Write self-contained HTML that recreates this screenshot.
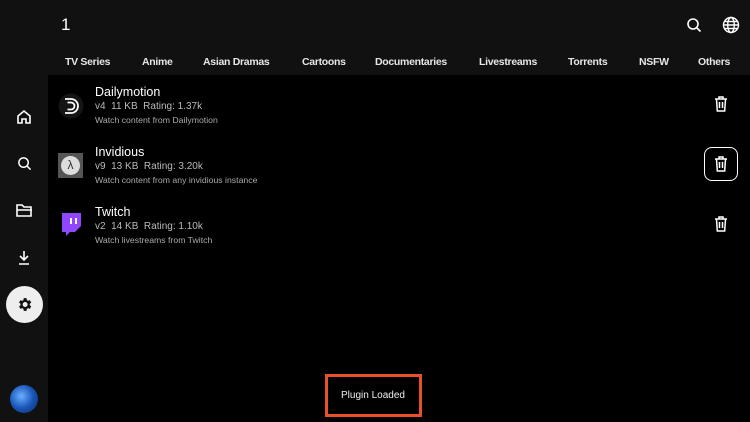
<!DOCTYPE html><html><head><style>
body{margin:0;width:750px;height:422px;background:#000;font-family:"Liberation Sans",sans-serif;color:#fff;position:relative;overflow:hidden}
.a{position:absolute}
.side{left:0;top:0;width:48px;height:422px;background:#111}
.top{left:0;top:0;width:750px;height:75px;background:#111}
.tab{top:56px;font-size:10.5px;font-weight:bold;color:#e6e6e6;white-space:nowrap;letter-spacing:-0.3px}
.t{font-size:12.5px;color:#fff}
.m{font-size:10px;color:#bbb}
.d{font-size:8.7px;color:#aaa}
</style></head><body>
<div class="a top"></div><div class="a side"></div>
<div class="a" style="left:61px;top:15px;font-size:17px">1</div>
<svg class="a" style="left:686px;top:17px" width="16" height="16" viewBox="0 0 16 16"><circle cx="7" cy="7" r="5" fill="none" stroke="#fff" stroke-width="1.6"/><path d="M11 11l3.5 3.5" stroke="#fff" stroke-width="1.6"/></svg>
<svg class="a" style="left:722px;top:16px" width="18" height="18" viewBox="0 0 18 18" fill="none" stroke="#fff" stroke-width="1.4"><circle cx="9" cy="9" r="7.5"/><ellipse cx="9" cy="9" rx="3.3" ry="7.5"/><path d="M1.5 9h15M2.5 5.5h13M2.5 12.5h13"/></svg>
<div class="a tab" style="left:65px">TV Series</div>
<div class="a tab" style="left:142px">Anime</div>
<div class="a tab" style="left:203px">Asian Dramas</div>
<div class="a tab" style="left:302px">Cartoons</div>
<div class="a tab" style="left:375px">Documentaries</div>
<div class="a tab" style="left:479px">Livestreams</div>
<div class="a tab" style="left:568px">Torrents</div>
<div class="a tab" style="left:639px">NSFW</div>
<div class="a tab" style="left:698px">Others</div>
<svg class="a" style="left:16px;top:109px" width="16" height="16" viewBox="0 0 16 16" fill="none" stroke="#fff" stroke-width="1.6"><path d="M2 7l6-5 6 5v7H10v-4H6v4H2z"/></svg>
<svg class="a" style="left:17px;top:156px" width="15" height="15" viewBox="0 0 16 16" fill="none" stroke="#fff" stroke-width="1.6"><circle cx="7" cy="7" r="5"/><path d="M11 11l3.5 3.5"/></svg>
<svg class="a" style="left:16px;top:203px" width="17" height="15" viewBox="0 0 17 15" fill="none" stroke="#fff" stroke-width="1.6"><path d="M1 2h5l2 2h7v9H1z M1 7h15"/></svg>
<svg class="a" style="left:18px;top:250px" width="12" height="15" viewBox="0 0 12 15" fill="none" stroke="#fff" stroke-width="1.6"><path d="M6 1v9M2 6l4 4 4-4M1 14h10"/></svg>
<div class="a" style="left:6px;top:286px;width:37px;height:37px;border-radius:50%;background:#eee"></div>
<svg class="a" style="left:16px;top:296px" width="17" height="17" viewBox="0 0 24 24"><path fill="#111" d="M19.4 13a7.5 7.5 0 000-2l2.1-1.6-2-3.5-2.5 1a7 7 0 00-1.700-1L14.9 3h-4l-.4 2.9a7 7 0 00-1.7 1l-2.5-1-2 3.5L6.4 11a7.5 7.5 0 000 2l-2.1 1.6 2 3.5 2.5-1a7 7 0 001.7 1l.4 2.9h4l.4-2.9a7 7 0 001.7-1l2.5 1 2-3.5zM12.9 15.5a3.5 3.5 0 110-7 3.5 3.5 0 010 7z"/></svg>
<div class="a" style="left:10px;top:385px;width:28px;height:28px;border-radius:50%;background:radial-gradient(circle at 40% 40%,#6ab0ff,#1a56b8 50%,#0a2a66)"></div>
<svg class="a" style="left:58px;top:93px" width="26" height="26" viewBox="0 0 26 26" fill="none" stroke="#fff" stroke-width="1.8"><circle cx="13" cy="13" r="12.5" fill="#151515" stroke="none"/><path d="M7 6h6a7 7 0 010 14H7M9.5 9.5h3.5a3.5 3.5 0 010 7H9.5"/></svg>
<div class="a t" style="left:95px;top:85px">Dailymotion</div>
<div class="a m" style="left:95px;top:101px">v4 &nbsp;11 KB &nbsp;Rating: 1.37k</div>
<div class="a d" style="left:95px;top:115px">Watch content from Dailymotion</div>
<div class="a" style="left:58px;top:153px;width:25px;height:25px;background:#555"></div>
<div class="a" style="left:61px;top:156px;width:19px;height:19px;border-radius:50%;background:#ddd;color:#333;font-size:12px;text-align:center;line-height:19px">λ</div>
<div class="a t" style="left:95px;top:145px">Invidious</div>
<div class="a m" style="left:95px;top:161px">v9 &nbsp;13 KB &nbsp;Rating: 3.20k</div>
<div class="a d" style="left:95px;top:175px">Watch content from any invidious instance</div>
<svg class="a" style="left:59px;top:212px" width="23" height="25" viewBox="0 0 23 25"><path fill="#9146ff" d="M3 1h19v13l-6 6h-5l-4 4v-4H3z"/><path fill="#fff" d="M11 6h2v6h-2zM16 6h2v6h-2z"/></svg>
<div class="a t" style="left:95px;top:205px">Twitch</div>
<div class="a m" style="left:95px;top:221px">v2 &nbsp;14 KB &nbsp;Rating: 1.10k</div>
<div class="a d" style="left:95px;top:235px">Watch livestreams from Twitch</div>
<svg class="a" style="left:714px;top:96px" width="14" height="16" viewBox="0 0 14 16" fill="none" stroke="#fff" stroke-width="1.5"><path d="M1 3h12M5 3V1h4v2M2.5 3l.8 12h7.4l.8-12M5.5 6v6M8.5 6v6"/></svg>
<div class="a" style="left:704px;top:147px;width:34px;height:34px;border:1.5px solid #fff;border-radius:8px;box-sizing:border-box"></div>
<svg class="a" style="left:714px;top:156px" width="14" height="16" viewBox="0 0 14 16" fill="none" stroke="#fff" stroke-width="1.5"><path d="M1 3h12M5 3V1h4v2M2.5 3l.8 12h7.4l.8-12M5.5 6v6M8.5 6v6"/></svg>
<svg class="a" style="left:714px;top:216px" width="14" height="16" viewBox="0 0 14 16" fill="none" stroke="#fff" stroke-width="1.5"><path d="M1 3h12M5 3V1h4v2M2.5 3l.8 12h7.4l.8-12M5.5 6v6M8.5 6v6"/></svg>
<div class="a" style="left:325px;top:374px;width:97px;height:43px;border:3px solid #e8502a;box-sizing:border-box"></div>
<div class="a" style="left:341px;top:390px;font-size:10px;color:#eee">Plugin Loaded</div>
</body></html>
